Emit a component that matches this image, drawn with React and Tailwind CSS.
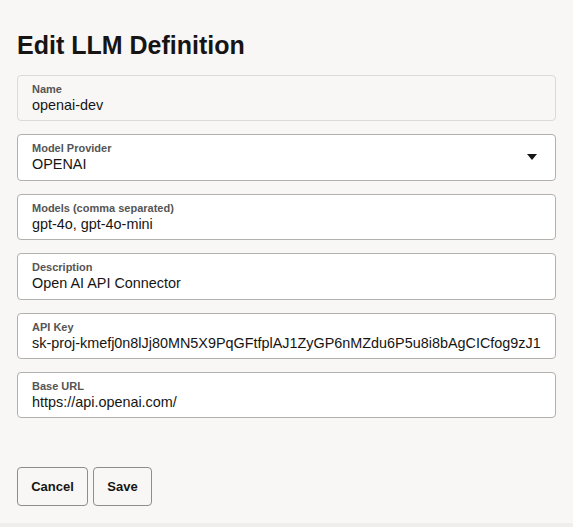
import { useState } from "react";

function Field({ label, value, disabled, select }) {
  return (
    <div
      className={
        "relative h-[46.4px] rounded-[4px] border px-[14px] pt-[7px] " +
        (disabled ? "border-[#dcdad8] bg-[#f8f7f6]" : "border-[#b3b1ae] bg-white")
      }
    >
      <div className="text-[11px] font-bold leading-[13px] text-[#555]">{label}</div>
      <div className="text-[14.4px] leading-[18px] text-[#161513] whitespace-nowrap overflow-hidden">{value}</div>
      {select && (
        <svg className="absolute right-[18px] top-[19px]" width="10" height="6" viewBox="0 0 10 6">
          <path d="M0 0h10L5 6z" fill="#161513" />
        </svg>
      )}
    </div>
  );
}

export default function App() {
  const [fields] = useState([
    { label: "Name", value: "openai-dev", disabled: true },
    { label: "Model Provider", value: "OPENAI", select: true },
    { label: "Models (comma separated)", value: "gpt-4o, gpt-4o-mini" },
    { label: "Description", value: "Open AI API Connector" },
    { label: "API Key", value: "sk-proj-kmefj0n8lJj80MN5X9PqGFtfplAJ1ZyGP6nMZdu6P5u8i8bAgCICfog9zJ1" },
    { label: "Base URL", value: "https://api.openai.com/" },
  ]);

  return (
    <div className="min-h-[527px] bg-[#f8f7f6] font-['Liberation_Sans',Arial,sans-serif] text-[#161513]">
      <div className="h-[523px] px-[17px] pt-[30px]">
        <h1 className="text-[25px] font-bold leading-[30px] text-[#161513]">Edit LLM Definition</h1>
        <div className="mt-[15px] flex flex-col gap-[13px]">
          {fields.map((f) => (
            <Field key={f.label} {...f} />
          ))}
        </div>
        <div className="mt-[48.6px] flex gap-[5px]">
          <button className="h-[39px] w-[71px] rounded-[4px] border border-[#8f8d8a] bg-[#f8f7f6] text-[13px] font-bold text-[#161513]">
            Cancel
          </button>
          <button className="h-[39px] w-[59px] rounded-[4px] border border-[#8f8d8a] bg-[#f8f7f6] text-[13px] font-bold text-[#161513]">
            Save
          </button>
        </div>
      </div>
      <div className="h-[4px] bg-[#efeeec]" />
    </div>
  );
}
